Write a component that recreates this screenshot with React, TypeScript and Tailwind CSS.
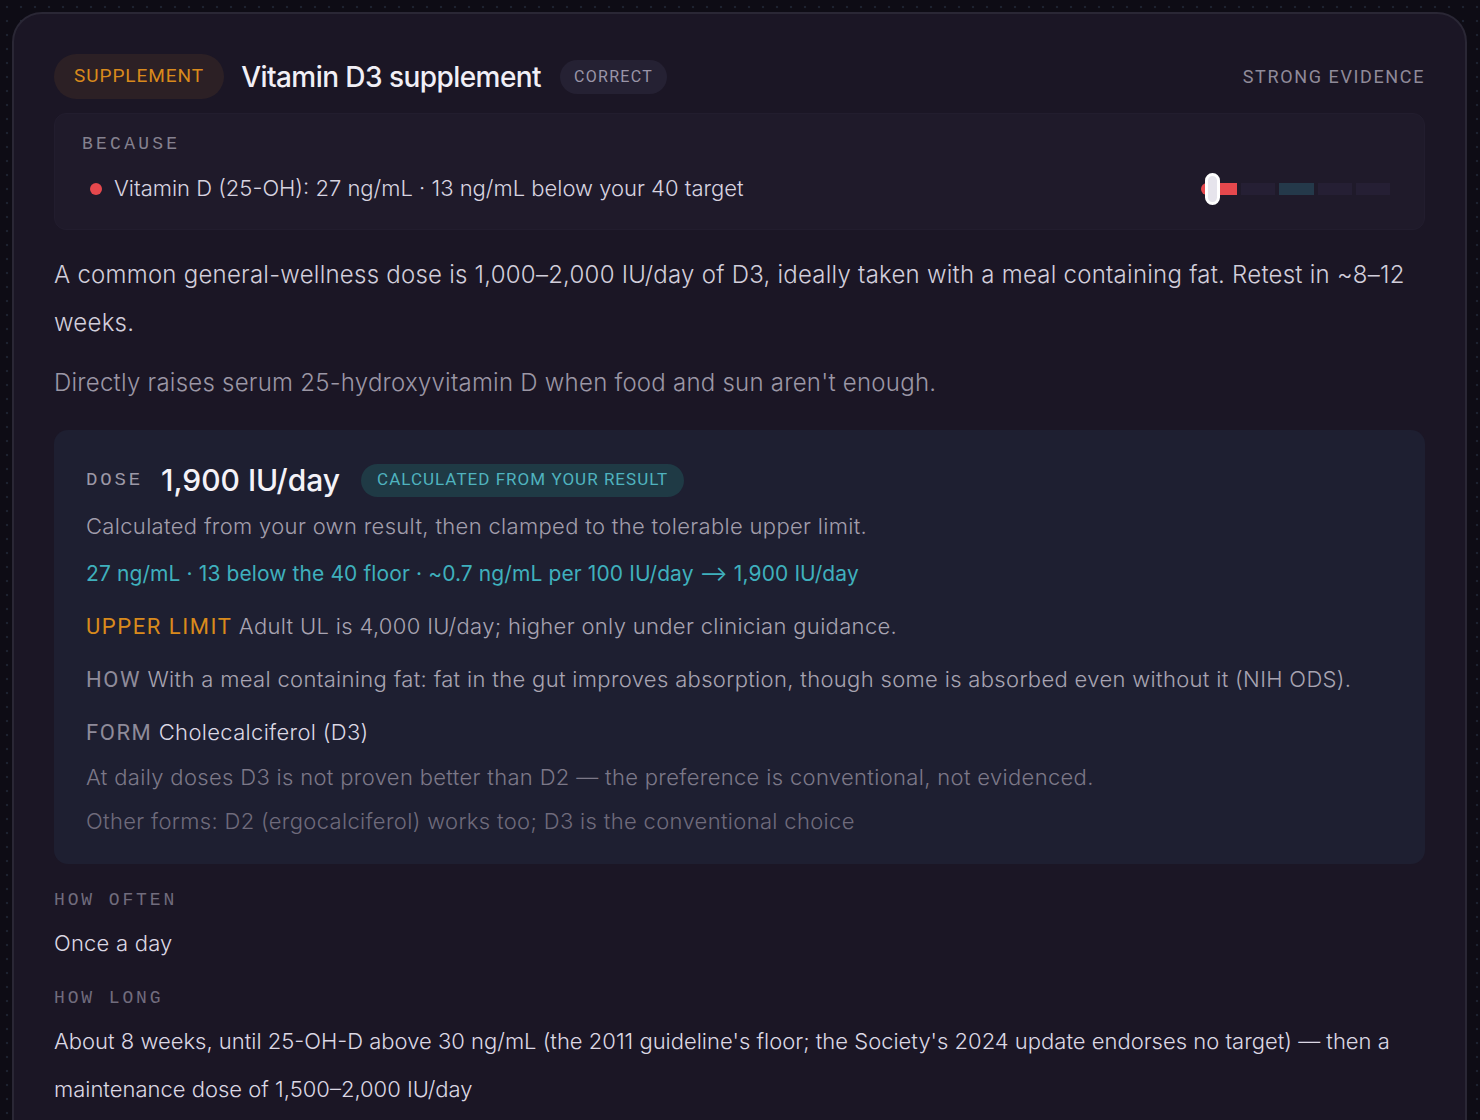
import React from 'react'

const body = "font-['Inter','Noto_Sans',sans-serif]"
const cond = "font-['Roboto','Liberation_Sans',sans-serif]"
const mono = "font-['Liberation_Mono','DejaVu_Sans_Mono',monospace]"

/**
 * Barra de faixa com o marcador do resultado
 */
const RangeBar: React.FC = () => {
  return (
    <div className="relative mr-[5px] flex h-[12px] w-[191px] items-center gap-[4px]">
      <div className="h-full w-[36px] rounded-l-full bg-[#e5484d]" />
      <div className="h-full w-[34px] bg-[#251f34]" />
      <div className="h-full w-[35px] bg-[#24394a]" />
      <div className="h-full w-[34px] bg-[#251f34]" />
      <div className="h-full w-[34px] bg-[#251f34]" />
      <div className="absolute left-[4px] top-[-10px] h-[32px] w-[15px] rounded-full border-[3px] border-white bg-[#e6e4ec]" />
    </div>
  )
}

export default function App() {
  return (
    <div className="h-[1120px] overflow-hidden bg-[#0e0c15] bg-[radial-gradient(circle,#1d2230_1px,transparent_1.6px)] bg-[length:14px_14px] pl-[12px] pr-[13px] pt-[12px]">
      <div className={`min-h-[1200px] rounded-[30px] border-2 border-[#2a2735] bg-[#1b1625] px-[40px] pt-[40px] ${body}`}>
        {/* cabeçalho */}
        <div className="flex h-[45px] items-center">
          <span className={`flex h-[45px] items-center rounded-full bg-[#2c2025] px-[20px] text-[19px] tracking-[0.05em] text-[#d98a1c] ${cond}`}>
            SUPPLEMENT
          </span>
          <h1 className="ml-[17px] text-[28px] font-medium tracking-[-0.02em] text-[#f1eff6]">Vitamin D3 supplement</h1>
          <span className={`ml-[19px] flex h-[34px] items-center rounded-full bg-[#252133] px-[14px] text-[16px] tracking-[0.08em] text-[#9a95a8] ${cond}`}>
            CORRECT
          </span>
          <span className={`ml-auto text-[18px] tracking-[0.09em] text-[#8f8a99] ${cond}`}>STRONG EVIDENCE</span>
        </div>

        {/* porque */}
        <div className="mt-[14px] h-[117px] rounded-[12px] border border-[#221d2e] bg-[#1f1a2a] px-[27px] pt-[17px]">
          <div className={`text-[18px] leading-[26px] tracking-[0.18em] text-[#85818f] ${mono}`}>BECAUSE</div>
          <div className="mt-[15px] flex items-center justify-between">
            <div className="flex items-center">
              <span className="ml-[8px] h-[12px] w-[12px] rounded-full bg-[#e5484d]" />
              <span className="ml-[12px] text-[22px] font-light tracking-[0em] text-[#d8d4e0]">
                Vitamin D (25-OH): 27 ng/mL · 13 ng/mL below your 40 target
              </span>
            </div>
            <RangeBar />
          </div>
        </div>

        <p className="mt-[21px] text-[24px] font-light leading-[48px] tracking-[0.01em] text-[#d2cedb]">
          A common general-wellness dose is 1,000–2,000 IU/day of D3, ideally taken with a meal containing fat. Retest in ~8–12 weeks.
        </p>
        <p className="mt-[12px] text-[24px] font-light leading-[48px] tracking-[0.01em] text-[#9b97a5]">
          Directly raises serum 25-hydroxyvitamin D when food and sun aren't enough.
        </p>

        {/* dose */}
        <div className="mt-[23px] rounded-[14px] bg-[#1e1f31] px-[32px] pb-[27px] pt-[32px] text-[22px] font-light tracking-[0.015em]">
          <div className="flex h-[36px] items-center">
            <span className={`text-[19px] tracking-[0.15em] text-[#9c98a6] ${mono}`}>DOSE</span>
            <span className="ml-[18px] text-[30px] font-medium tracking-[0em] text-[#f4f2f8]">1,900 IU/day</span>
            <span className={`ml-[21px] flex h-[33px] items-center rounded-full bg-[#1f3a45] px-[16px] text-[17px] font-normal tracking-[0.06em] text-[#4fb3bf] ${cond}`}>
              CALCULATED FROM YOUR RESULT
            </span>
          </div>
          <div className="mt-[12px] leading-[32px] text-[#a29eac]">
            Calculated from your own result, then clamped to the tolerable upper limit.
          </div>
          <div className="mt-[16px] text-[21px] font-normal leading-[32px] tracking-[0.005em] text-[#3fb0bd]">
            27 ng/mL · 13 below the 40 floor · ~0.7 ng/mL per 100 IU/day ⟶ 1,900 IU/day
          </div>
          <div className="mt-[20px] leading-[32px] text-[#a8a4b2]">
            <span className={`font-normal tracking-[0.07em] text-[#d98a1c] ${cond}`}>UPPER LIMIT</span> Adult UL is 4,000 IU/day; higher only under clinician guidance.
          </div>
          <div className="mt-[20px] leading-[32px] text-[#a8a4b2]">
            <span className={`font-normal tracking-[0.07em] text-[#8f8b9a] ${cond}`}>HOW</span> With a meal containing fat: fat in the gut improves absorption, though some is absorbed even without it (NIH ODS).
          </div>
          <div className="mt-[20px] leading-[32px] text-[#dcd8e4]">
            <span className={`font-normal tracking-[0.07em] text-[#8f8b9a] ${cond}`}>FORM</span> Cholecalciferol (D3)
          </div>
          <div className="mt-[12px] leading-[32px] text-[#7c7888]">
            At daily doses D3 is not proven better than D2 — the preference is conventional, not evidenced.
          </div>
          <div className="mt-[12px] leading-[32px] text-[#6f6b7c]">
            Other forms: D2 (ergocalciferol) works too; D3 is the conventional choice
          </div>
        </div>

        <div className={`mt-[24px] text-[18px] leading-[24px] tracking-[0.16em] text-[#716c7d] ${mono}`}>HOW OFTEN</div>
        <div className="mt-[15px] text-[22px] font-light leading-[32px] tracking-[0.01em] text-[#dcd8e4]">Once a day</div>
        <div className={`mt-[27px] text-[18px] leading-[24px] tracking-[0.16em] text-[#716c7d] ${mono}`}>HOW LONG</div>
        <p className="mt-[7px] text-[22px] font-light leading-[48px] tracking-[0em] text-[#dcd8e4]">
          About 8 weeks, until 25-OH-D above 30 ng/mL (the 2011 guideline's floor; the Society's 2024 update endorses no target) — then a maintenance dose of 1,500–2,000 IU/day
        </p>
      </div>
    </div>
  )
}
